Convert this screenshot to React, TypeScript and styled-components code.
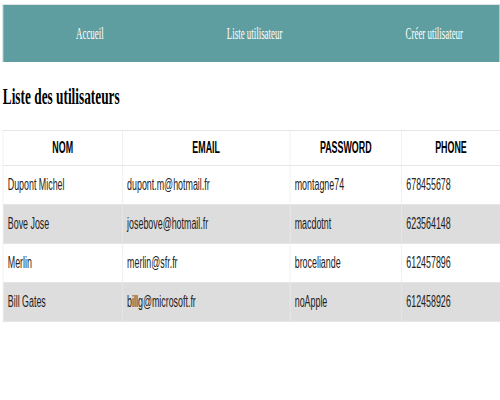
import React from 'react';
import styled, { createGlobalStyle } from 'styled-components';

interface IUser {
    nom: string;
    email: string;
    password: string;
    phone: string;
}

const USERS: IUser[] = [
    { nom: 'Dupont Michel', email: 'dupont.m@hotmail.fr', password: 'montagne74', phone: '678455678' },
    { nom: 'Bove Jose', email: 'josebove@hotmail.fr', password: 'macdotnt', phone: '623564148' },
    { nom: 'Merlin', email: 'merlin@sfr.fr', password: 'broceliande', phone: '612457896' },
    { nom: 'Bill Gates', email: 'billg@microsoft.fr', password: 'noApple', phone: '612458926' }
];

const LINKS = ['Accueil', 'Liste utilisateur', 'Créer utilisateur'];

// the capture squeezes the page horizontally
const SQUEEZE = 0.555;

const GlobalStyle = createGlobalStyle`
    html, body {
        margin: 0;
        padding: 0;
        overflow: hidden;
        background: #fff;
    }
`;

const Page = styled.div`
    width: 900px;
    padding: 4px 0 0 5px;
    box-sizing: border-box;
    transform: scaleX(${SQUEEZE});
    transform-origin: 0 0;
    font-family: 'Liberation Serif', 'Times New Roman', serif;
`;

const NavBar = styled.nav`
    display: flex;
    align-items: center;
    gap: 222px;
    height: 57px;
    padding-left: 131px;
    background: #5f9ea0;
    border-top: 1px solid #e4e4e4;
    border-left: 1px solid #e4e4e4;
`;

const NavLink = styled.a`
    color: #fff;
    font-size: 16px;
    text-decoration: none;
    cursor: pointer;
`;

const Title = styled.h2`
    margin: 21px 0 20px;
    font-size: 24px;
    font-weight: 700;
    color: #000;
`;

const Table = styled.table`
    width: 892px;
    border-collapse: collapse;
    table-layout: fixed;
    font-family: 'Liberation Sans', Arial, sans-serif;
    font-size: 16px;
`;

const HeadCell = styled.th<{ $width: number }>`
    width: ${(p) => p.$width}px;
    height: 34px;
    padding: 0;
    text-align: center;
    font-weight: 700;
    color: #000;
    border: 1px solid #e6e6e6;
`;

const Row = styled.tr<{ $striped: boolean }>`
    height: 39px;
    background: ${(p) => (p.$striped ? '#dddddd' : '#fff')};
`;

const Cell = styled.td`
    padding: 0 8px;
    color: #222;
    border: 1px solid #e6e6e6;
`;

const COLUMNS = [
    { label: 'NOM', width: 214 },
    { label: 'EMAIL', width: 301 },
    { label: 'PASSWORD', width: 200 },
    { label: 'PHONE', width: 177 }
];

const App = () => (
    <>
        <GlobalStyle />
        <Page>
            <NavBar>
                {LINKS.map((link) => (
                    <NavLink key={link}>{link}</NavLink>
                ))}
            </NavBar>
            <Title>Liste des utilisateurs</Title>
            <Table>
                <thead>
                    <tr>
                        {COLUMNS.map((col) => (
                            <HeadCell key={col.label} $width={col.width}>
                                {col.label}
                            </HeadCell>
                        ))}
                    </tr>
                </thead>
                <tbody>
                    {USERS.map((user, i) => (
                        <Row key={user.email} $striped={i % 2 === 1}>
                            <Cell>{user.nom}</Cell>
                            <Cell>{user.email}</Cell>
                            <Cell>{user.password}</Cell>
                            <Cell>{user.phone}</Cell>
                        </Row>
                    ))}
                </tbody>
            </Table>
        </Page>
    </>
);

export default App;
